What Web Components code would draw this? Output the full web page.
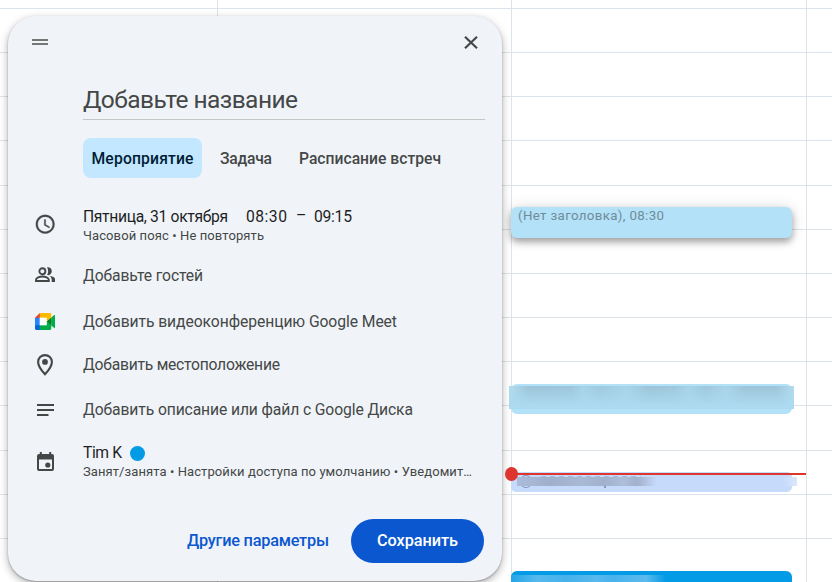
<!DOCTYPE html>
<html lang="ru"><head><meta charset="utf-8"><title>Календарь</title>
<style>html,body{margin:0;height:100%;overflow:hidden;background:#fff}body{font-family:Roboto,"Liberation Sans",sans-serif}</style></head>
<body>
<calendar-page></calendar-page>
<script>
const define=(name,html,ready)=>{
  const t=document.createElement('template');t.innerHTML=html;
  customElements.define(name,class extends HTMLElement{
    constructor(){super();this.attachShadow({mode:'open'}).append(t.content.cloneNode(true));}
    connectedCallback(){ready&&ready(this,this.shadowRoot);}
  });
};

// A single line whose tracking is adjusted so it spans the width in "w".
define('fit-text',`<style>:host{display:inline-block;white-space:nowrap}span{display:inline-block}</style><span></span>`,(el,root)=>{
  const s=root.querySelector('span');s.textContent=el.getAttribute('text');
  const w=+el.getAttribute('w'),n=s.textContent.length;
  const now=s.getBoundingClientRect().width;
  if(w&&now){s.style.letterSpacing=((w-now)/(n-1))+'px';el.style.width=w+'px';}
});

const icons={
 drag:'<svg width="16" height="6"><path d="M0 1h16M0 5h16" stroke="#747775" stroke-width="2"/></svg>',
 close:'<svg width="14" height="13" viewBox="0 0 14 13"><path d="M1 .8l12 11.4M13 .8L1 12.2" stroke="#444746" stroke-width="2.2" fill="none"/></svg>',
 clock:'<svg width="22.4" height="22.4" viewBox="0 0 24 24"><path fill="#444746" stroke="#444746" stroke-width=".3" d="M11.99 2C6.47 2 2 6.48 2 12s4.47 10 9.99 10C17.52 22 22 17.52 22 12S17.52 2 11.99 2zM12 20c-4.42 0-8-3.58-8-8s3.58-8 8-8 8 3.58 8 8-3.58 8-8 8zm.5-13H11v6l5.25 3.15.75-1.23-4.5-2.67z"/></svg>',
 people:'<svg width="20.4" height="15.4" viewBox="0 0 20.4 15.4"><g fill="none" stroke="#444746" stroke-width="1.9"><circle cx="7.4" cy="4.3" r="3"/><path d="M1 14v-1.3c0-2 3.6-3.2 6.4-3.2s6.4 1.2 6.4 3.2V14z"/></g><path fill="#444746" d="M12 .5c2.3-.6 4.8 1 4.8 3.8s-2.5 4.5-4.8 3.8c1.5-2 1.5-5.600 0-7.600zM14.800 8.900c3 .4 5.600 1.700 5.600 3.900v2.200h-3.700v-2.300c0-1.600-.7-2.800-1.900-3.800z"/></svg>',
 meet:'<svg width="20.500" height="17" viewBox="0 0 87.500 72"><path fill="#00832d" d="M49.500 36l8.530 9.750 11.470 7.330 2-17.020-2-16.640-11.690 6.440z"/><path fill="#0066da" d="M0 51.500V66c0 3.315 2.685 6 6 6h14.500l3-10.960-3-9.540-9.950-3z"/><path fill="#e94235" d="M20.500 0L0 20.500l10.550 3 9.950-3 2.950-9.410z"/><path fill="#2684fc" d="M20.500 20.500H0v31h20.500z"/><path fill="#00ac47" d="M82.600 8.680L69.500 19.420v33.660l13.160 10.790c1.970 1.540 4.850.135 4.850-2.370V11c0-2.535-2.945-3.925-4.910-2.320zM49.500 36v15.500h-29V72h43c3.315 0 6-2.685 6-6V53.080z"/><path fill="#ffba00" d="M63.500 0h-43v20.500h29V36l20-16.570V6c0-3.315-2.685-6-6-6z"/><path fill="#fff" d="M20.500 20.500h29v31h-29z"/></svg>',
 pin:'<svg width="16" height="22" viewBox="0 0 16 22"><path d="M8 1.100c-3.800 0-6.900 3-6.900 6.900 0 4.900 6.900 12.300 6.900 12.300s6.900-7.400 6.900-12.300c0-3.900-3.100-6.900-6.900-6.900z" fill="none" stroke="#444746" stroke-width="2.100"/><circle cx="8" cy="7.900" r="2.900" fill="#444746"/></svg>',
 notes:'<svg width="17" height="12" viewBox="0 0 17 12"><path d="M0 1h17M0 6h17M0 11h11.500" stroke="#444746" stroke-width="1.900"/></svg>',
 event:'<svg width="17" height="19" viewBox="0 0 17 19"><path fill="#444746" fill-rule="evenodd" d="M2.800 0h2v2h7.400V0h2v2H15a2 2 0 0 1 2 2v13a2 2 0 0 1-2 2H2a2 2 0 0 1-2-2V4a2 2 0 0 1 2-2h.8zM2 7.500V17h13V7.500z"/><circle cx="10.800" cy="13" r="2.600" fill="#444746"/></svg>'
};
define('ui-icon','<style>:host{display:flex;align-items:center;justify-content:center}svg{display:block}</style><span></span>',(el,r)=>{r.querySelector('span').innerHTML=icons[el.getAttribute('name')];});

define('form-row',`<style>:host{display:grid;grid-template-columns:75px 1fr;align-items:center;color:#444746;font-size:15.700px;line-height:20px}
ui-icon{width:74px;margin-top:var(--icon-shift,0)}div{display:flex;flex-direction:column;min-width:0}</style><div><slot></slot></div>`,
(el,r)=>{const i=document.createElement('ui-icon');i.setAttribute('name',el.getAttribute('icon'));r.querySelector('div').before(i);});

define('type-tab',`<style>:host{display:flex;height:40px;align-items:center;justify-content:center;border-radius:8px;color:#444746;font-size:15.700px;font-weight:500}:host([selected]){background:#c2e7ff;color:#001d35}</style><slot></slot>`);

define('event-dialog',`<style>
:host{display:flex;flex-direction:column;box-sizing:border-box;width:494px;height:565px;border-radius:28px;background:#f0f4f9;box-shadow:0 3px 9px rgba(0,0,0,.3),0 1px 2px rgba(0,0,0,.25)}
header{height:52px;display:flex;justify-content:space-between;align-items:center;padding:0 24px 0 24px}
.title{margin:0 17px 0 75px;border-bottom:1px solid #c4c7c5;display:flex;align-items:flex-end;color:#444746;font-size:24.500px;line-height:28px;padding-bottom:5px;box-sizing:border-box;height:52px}
nav{display:flex;margin:18px 0 0 75px;height:40px}
.form{display:grid;grid-template-rows:52px 46px 47px 40px 49px 56px;margin-top:22px}
.line{display:flex;color:#1f1f1f;font-size:15.700px;height:20px;align-items:center}
.line fit-text,.low{padding-top:1px}
.line fit-text{margin-bottom:-1px}
.small{font-size:13px;display:block}
.dot{width:15px;height:15px;border-radius:50%;background:#039be5;margin-left:8px}
footer{display:flex;justify-content:flex-end;align-items:center;gap:22px;margin:29px 18px 0 0;font-size:16.300px;font-weight:500;color:#0b57d0}
.save{width:133px;height:44px;border-radius:22px;background:#0b57d0;color:#fff;display:flex;align-items:center;justify-content:center}
footer fit-text{margin-bottom:1px}
</style>
<header><ui-icon name="drag"></ui-icon><ui-icon name="close"></ui-icon></header>
<div class="title"><fit-text text="Добавьте название" w="215"></fit-text></div>
<nav><type-tab selected style="width:119px"><fit-text text="Мероприятие" w="102"></fit-text></type-tab><type-tab style="width:88px"><fit-text text="Задача" w="52"></fit-text></type-tab><type-tab style="width:160px"><fit-text text="Расписание встреч" w="142"></fit-text></type-tab></nav>
<div class="form">
<form-row icon="clock" style="--icon-shift:-3px"><div class="line"><fit-text text="Пятница, 31 октября" w="145"></fit-text><fit-text text="08:30" w="41" style="margin-left:18px"></fit-text><span style="margin:0 9px 0 9px;width:9px">–</span><fit-text text="09:15" w="38"></fit-text></div><fit-text class="small" text="Часовой пояс • Не повторять" w="181"></fit-text></form-row>
<form-row icon="people"><fit-text class="low" text="Добавьте гостей" w="120"></fit-text></form-row>
<form-row icon="meet" style="--icon-shift:-1px"><fit-text text="Добавить видеоконференцию Google Meet" w="314"></fit-text></form-row>
<form-row icon="pin"><fit-text text="Добавить местоположение" w="197"></fit-text></form-row>
<form-row icon="notes"><fit-text class="low" text="Добавить описание или файл с Google Диска" w="330"></fit-text></form-row>
<form-row icon="event" style="--icon-shift:-1px"><div class="line"><fit-text text="Tim K" w="39"></fit-text><span class="dot" style="margin-top:2px"></span></div><fit-text class="small" text="Занят/занята • Настройки доступа по умолчанию • Уведомит…" w="389"></fit-text></form-row>
</div>
<footer><fit-text text="Другие параметры" w="142"></fit-text><div class="save"><fit-text text="Сохранить" w="81"></fit-text></div></footer>`);

define('calendar-grid',`<style>:host{display:grid;width:832px;height:582px;grid-template-columns:218px 294px 295px 25px;background:repeating-linear-gradient(to bottom,transparent 0 43.170px,#dde3ea 43.170px 44.170px) 0 -35.270px/100% 660px no-repeat}
i{border-right:1px solid #dde3ea}i:last-child{border:0}</style><i></i><i></i><i></i><i></i>`);

define('event-chip',`<style>:host{position:absolute;left:511px;width:281px;box-sizing:border-box;border-radius:6px;padding:0 7px;font-size:13.300px;line-height:18px}</style><slot></slot>`);

define('calendar-page',`<style>:host{display:block;position:relative;width:832px;height:582px;overflow:hidden}
event-dialog{position:absolute;left:8px;top:16px}
.a{top:207px;height:31px;background:#b3e1f7;color:#708c9a;box-shadow:0 4px 7px rgba(0,0,0,.33),0 0 16px rgba(0,0,0,.12)}
.b{top:384px;height:30px;background:#b3e1f7}
.blur,.blur2,.blur3{position:absolute}
.blur{left:509px;top:386px;width:285px;height:23px;background:linear-gradient(to bottom,transparent,#acdaf0 85%),linear-gradient(90deg,#b3ddf0 0,#9dc3d8 7%,#9dc5da 22%,#a6d3e7 26%,#9fc8dc 32%,#a8d4e9 41%,#9bc3d7 49%,#9fc7db 58%,#a7d3e7 63%,#9fc7da 69%,#a9d3e8 76%,#9dc4d8 83%,#9dc4d8 94%,#b3ddf0)}
.c{top:472px;height:20px;background:#c6dafc;border-radius:5px}
.blur2{left:517px;top:477px;width:280px;height:9px;background:linear-gradient(90deg,#abbcda 0,#a0afcb 12%,#a9bad6 23%,#a1b1cd 31%,#adbedb 38%,#a2b1cc 43%,#c6dafc 50%,#c6dafc 95%,#dce7fb)}
.marks{position:absolute;left:520px;top:475px;width:12px;height:13px;box-sizing:border-box;border:1.500px solid #8694ae;border-radius:50%}
.marks2{position:absolute;left:541px;top:476px;width:100px;height:1px;background:repeating-linear-gradient(90deg,#8796b1 0 5px,transparent 5px 9px);opacity:.5}
.marks3{position:absolute;left:604px;top:486px;width:2px;height:2px;background:#8796b1}
.now{position:absolute;left:511px;top:473px;width:295px;height:2px;background:#dc362e}
.now:before{content:"";position:absolute;left:-6px;top:-6px;width:13px;height:14px;border-radius:50%;background:#dc362e}
.d{top:571px;height:20px;background:#039be5}
.blur3{left:511px;top:575px;width:155px;height:7px;background:linear-gradient(90deg,#24a6e8,#56b9ee 17%,#45b1eb 35%,#57b9ee 55%,#48b3ec 66%,#5bbbee 87%,#039be5)}
</style>
<calendar-grid></calendar-grid>
<event-chip class="a"><fit-text text="(Нет заголовка), 08:30" w="146"></fit-text></event-chip>
<event-chip class="b"></event-chip><div class="blur"></div>
<event-chip class="c"></event-chip><div class="marks"></div><div class="marks2"></div><div class="marks3"></div><div class="blur2"></div>
<event-chip class="d"></event-chip><div class="blur3"></div>
<event-dialog></event-dialog><div class="now"></div>`);
</script></body></html>
